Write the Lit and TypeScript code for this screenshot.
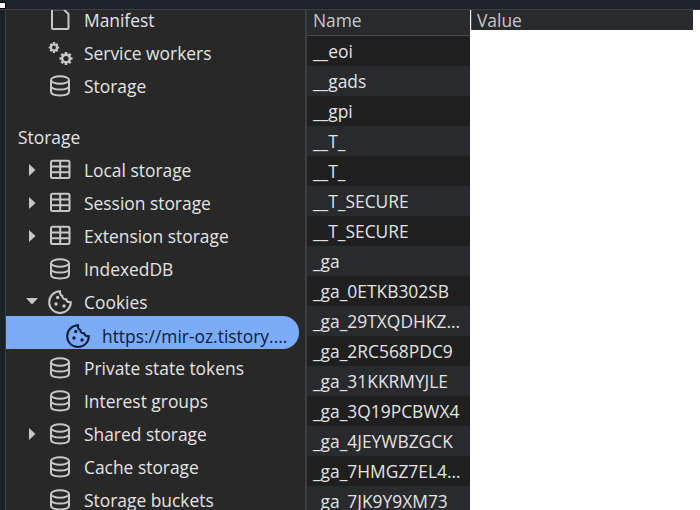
import { LitElement, html, css, svg } from "lit";
import { customElement } from "lit/decorators.js";

const ICONS: Record<string, unknown> = {
  doc: svg`<path d="M4 1.2H15.5L20.5 6V20A1 1 0 0 1 19.5 21H5A1 1 0 0 1 4 20V1.2" fill="none" stroke="currentColor" stroke-width="2"/>`,
  gears: svg`<g fill="none" stroke="currentColor"><circle cx="6" cy="6.5" r="3" stroke-width="2.2"/><path d="M6 1V3M6 10V12M.8 6.5H2.8M9.2 6.5H11.2M2.4 2.9L3.8 4.3M8.2 8.7L9.6 10.1M9.6 2.9L8.2 4.3M3.8 8.7L2.4 10.1" stroke-width="2.2"/><circle cx="18" cy="17.5" r="3.8" stroke-width="2.4"/><path d="M18 11V13.5M18 21.5V24M11.5 17.5H14M22 17.5H24.5M13.4 12.9L15.2 14.7M20.8 20.3L22.6 22.1M22.6 12.9L20.8 14.7M15.2 20.3L13.4 22.1" stroke-width="2.6"/></g>`,
  db: svg`<g transform="translate(2 1)" fill="none" stroke="currentColor" stroke-width="2"><ellipse cx="10" cy="5" rx="9" ry="3.8"/><path d="M1 5V16.5C1 19 5 20.4 10 20.4S19 19 19 16.5V5M1 10.8C1 13.2 5 14.6 10 14.6S19 13.2 19 10.8"/></g>`,
  grid: svg`<g transform="translate(2 1.5)" fill="none" stroke="currentColor" stroke-width="2"><rect x="1" y="1.2" width="18.5" height="17.3" rx="1.5"/><path d="M1 7H19.5M1 12.8H19.5M10.2 1.2V18.5"/></g>`,
  cookie: svg`<path d="M12 1.3C6 1.3 1.2 6.2 1.2 12.2S6 23 12 23 22.8 18.2 22.8 12.2C20.2 12.4 18.4 11.1 18.1 9.2 15.8 9.4 14.3 8 14.3 5.9 12.6 5.2 11.7 3.2 12 1.3Z" fill="none" stroke="currentColor" stroke-width="2"/><circle cx="9.7" cy="7.5" r="1.7" fill="currentColor"/><circle cx="8" cy="14" r="1.7" fill="currentColor"/><circle cx="16" cy="16" r="1.7" fill="currentColor"/>`,
};

type Item = { label: string; icon: string; arrow?: "right" | "down"; child?: boolean };

const TOP: Item[] = [
  { label: "Manifest", icon: "doc" },
  { label: "Service workers", icon: "gears" },
  { label: "Storage", icon: "db" },
];

const STORAGE: Item[] = [
  { label: "Local storage", icon: "grid", arrow: "right" },
  { label: "Session storage", icon: "grid", arrow: "right" },
  { label: "Extension storage", icon: "grid", arrow: "right" },
  { label: "IndexedDB", icon: "db" },
  { label: "Cookies", icon: "cookie", arrow: "down" },
  { label: "https://mir-oz.tistory.com", icon: "cookie", child: true },
  { label: "Private state tokens", icon: "db" },
  { label: "Interest groups", icon: "db" },
  { label: "Shared storage", icon: "db", arrow: "right" },
  { label: "Cache storage", icon: "db" },
  { label: "Storage buckets", icon: "db" },
];

const NAMES = [
  "__eoi", "__gads", "__gpi", "__T_", "__T_", "__T_SECURE", "__T_SECURE", "_ga",
  "_ga_0ETKB302SB", "_ga_29TXQDHKZWQ", "_ga_2RC568PDC9", "_ga_31KKRMYJLE",
  "_ga_3Q19PCBWX4", "_ga_4JEYWBZGCK", "_ga_7HMGZ7EL4YTR", "_ga_7JK9Y9XM73",
];

@customElement("app-root")
export class AppRoot extends LitElement {
  static styles = css`
    :host {
      display: block;
      width: 700px;
      height: 510px;
      overflow: hidden;
      background: #1b222a;
      font-family: "Open Sans", "Noto Sans", sans-serif;
      font-size: 17.4px;
      color: #e3e3e3;
    }
    .topbar { height: 9px; border-bottom: 1px solid #3c3e42; }
    .mark {
      width: 6px;
      height: 7px;
      box-sizing: border-box;
      position: relative;
      top: 2px;
      background: #fff;
      border: 1px solid #000;
      border-left: 0;
    }
    .main { display: flex; height: 500px; }
    .rail { width: 5px; flex: none; }
    .sidebar {
      width: 299px;
      flex: none;
      overflow: hidden;
      background: #282828;
      border-left: 1px solid #3c3e42;
    }
    .list { margin-top: -9px; }
    .row {
      display: flex;
      align-items: center;
      height: 33px;
      padding-top: 4px;
      box-sizing: border-box;
      white-space: nowrap;
    }
    .row.selected {
      background: #7cacf8;
      color: #0a1c38;
      border-radius: 0 16px 16px 0;
      width: 293px;
      padding-top: 6px;
    }
    .arrow { width: 20px; margin-left: 16px; flex: none; display: flex; justify-content: center; }
    .arrow svg { display: block; }
    .icon { width: 24px; height: 24px; margin-left: 6px; flex: none; color: #c7c7c7; }
    .icon svg { display: block; overflow: visible; }
    .selected .icon { color: #0a1c38; margin-left: 60px; }
    .label { margin-left: 12px; flex: 1; min-width: 0; overflow: hidden; text-overflow: ellipsis; }
    .selected .label { padding-right: 11px; }
    .heading { height: 33px; margin-top: 18px; padding: 7px 0 0 12px; box-sizing: border-box; }
    .divider { width: 2px; flex: none; background: #3c3e42; }
    .names { width: 163px; flex: none; background: #1f1f1f; overflow: hidden; }
    .head {
      height: 25px;
      background: #292a2d;
      border-bottom: 1px solid #47484b;
      padding-left: 6px;
      line-height: 20px;
      color: #c7c7c7;
    }
    .cell {
      height: 30px;
      line-height: 30px;
      padding: 0 8px 0 6px;
      overflow: hidden;
      white-space: nowrap;
      text-overflow: ellipsis;
    }
    .cell:nth-child(odd) { background: #1f1f1f; }
    .cell:nth-child(even) { background: #292a2d; }
    .values { flex: 1; background: #fff; }
    .value-head {
      width: 222px;
      height: 20px;
      background: #292a2d;
      line-height: 20px;
      padding-left: 5px;
      box-sizing: border-box;
      border-left: 1px solid #47484b;
      margin-left: 1px;
      color: #c7c7c7;
    }
  `;

  private rowTpl(it: Item) {
    return html`<div class="row ${it.child ? "selected" : ""}">
      ${it.child
        ? ""
        : html`<span class="arrow">${it.arrow === "right"
            ? html`<svg width="7" height="12" viewBox="0 0 7 12"><path d="M0 0L6.5 6 0 12Z" fill="#c7c7c7"/></svg>`
            : it.arrow === "down"
              ? html`<svg width="12" height="7" viewBox="0 0 12 7"><path d="M0 0H12L6 6.5Z" fill="#c7c7c7"/></svg>`
              : ""}</span>`}
      <span class="icon"><svg width="24" height="24" viewBox="0 0 24 24">${ICONS[it.icon]}</svg></span>
      <span class="label">${it.label}</span>
    </div>`;
  }

  render() {
    return html`
      <div class="topbar"><div class="mark"></div></div>
      <div class="main">
        <div class="rail"></div>
        <div class="sidebar">
          <div class="list">
            ${TOP.map((i) => this.rowTpl(i))}
            <div class="heading">Storage</div>
            ${STORAGE.map((i) => this.rowTpl(i))}
          </div>
        </div>
        <div class="divider"></div>
        <div class="names">
          <div class="head">Name</div>
          <div>${NAMES.map((n) => html`<div class="cell">${n}</div>`)}</div>
        </div>
        <div class="values"><div class="value-head">Value</div></div>
      </div>
    `;
  }
}
